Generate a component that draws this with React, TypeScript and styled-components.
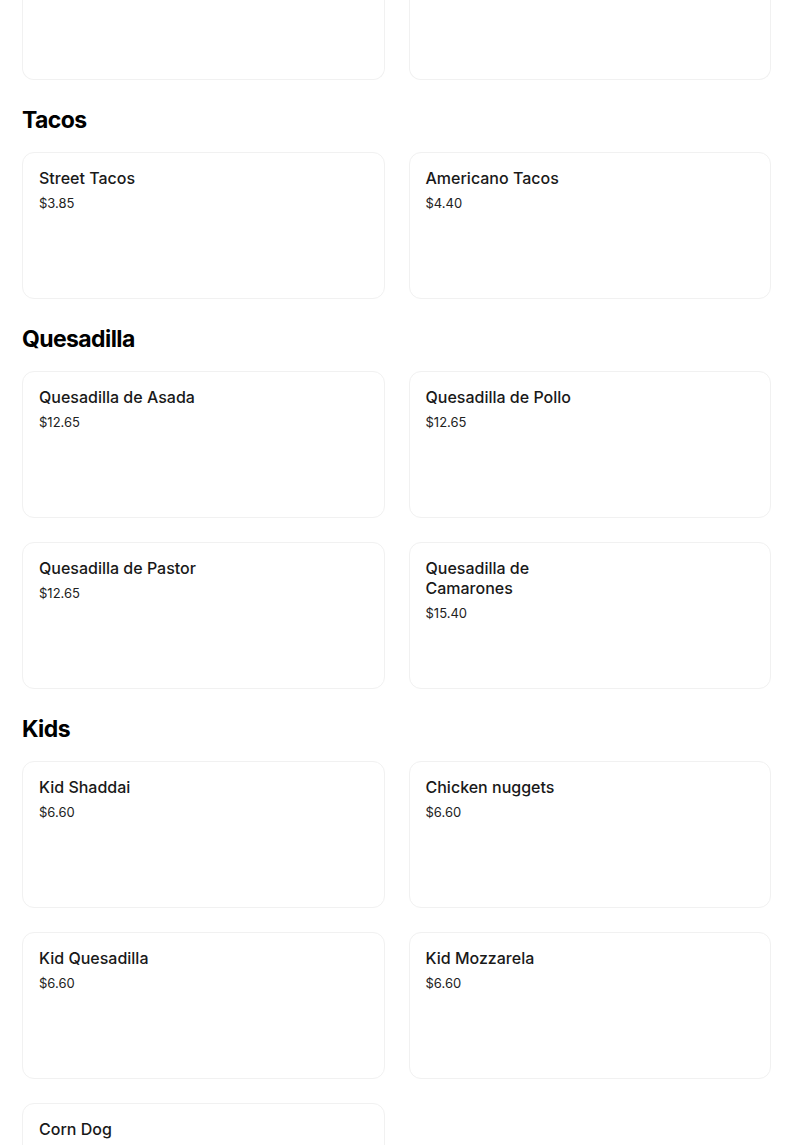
import React from "react"
import styled, { createGlobalStyle } from "styled-components"

type Item = { name: string; price?: string }
type Section = { title: string; items: Item[] }

const sections: Section[] = [
  {
    title: "Tacos",
    items: [
      { name: "Street Tacos", price: "$3.85" },
      { name: "Americano Tacos", price: "$4.40" }
    ]
  },
  {
    title: "Quesadilla",
    items: [
      { name: "Quesadilla de Asada", price: "$12.65" },
      { name: "Quesadilla de Pollo", price: "$12.65" },
      { name: "Quesadilla de Pastor", price: "$12.65" },
      { name: "Quesadilla de Camarones", price: "$15.40" }
    ]
  },
  {
    title: "Kids",
    items: [
      { name: "Kid Shaddai", price: "$6.60" },
      { name: "Chicken nuggets", price: "$6.60" },
      { name: "Kid Quesadilla", price: "$6.60" },
      { name: "Kid Mozzarela", price: "$6.60" },
      { name: "Corn Dog", price: "$6.60" }
    ]
  }
]

const App = () => {
  return (
    <Page>
      <GlobalStyle />
      <Grid>
        <Card clipped />
        <Card clipped />
      </Grid>
      {sections.map((s) => (
        <div key={s.title}>
          <Heading>{s.title}</Heading>
          <Grid>
            {s.items.map((item) => (
              <Card key={item.name}>
                <Name>{item.name}</Name>
                {item.price && <Price>{item.price}</Price>}
              </Card>
            ))}
          </Grid>
        </div>
      ))}
    </Page>
  )
}

const GlobalStyle = createGlobalStyle`
  body {
    margin: 0;
    background: #fff;
    color: #000;
    font-family: Inter, "Noto Sans", sans-serif;
    overflow: hidden;
  }
`

const Page = styled.div`
  width: 749px;
  margin-left: 22px;
`

const Grid = styled.div`
  display: grid;
  grid-template-columns: 1fr 1fr;
  gap: 24px;
`

const Card = styled.div<{ clipped?: boolean }>`
  box-sizing: border-box;
  height: ${({ clipped }) => (clipped ? "80px" : "147px")};
  padding: 15px 16px;
  border: 1px solid #f1f1f1;
  border-top: ${({ clipped }) => (clipped ? "none" : "1px solid #f1f1f1")};
  border-radius: ${({ clipped }) => (clipped ? "0 0 12px 12px" : "12px")};
  background: #fff;
`

const Heading = styled.h2`
  margin: 24px 0 16px;
  font-size: 23px;
  line-height: 32px;
  font-weight: 700;
  letter-spacing: -0.6px;
`

const Name = styled.div`
  max-width: 180px;
  font-size: 16px;
  line-height: 20px;
  font-weight: 500;
  color: #191919;
`

const Price = styled.div`
  margin-top: 5px;
  font-size: 13px;
  line-height: 20px;
  font-weight: 400;
  color: #222;
`

export default App
